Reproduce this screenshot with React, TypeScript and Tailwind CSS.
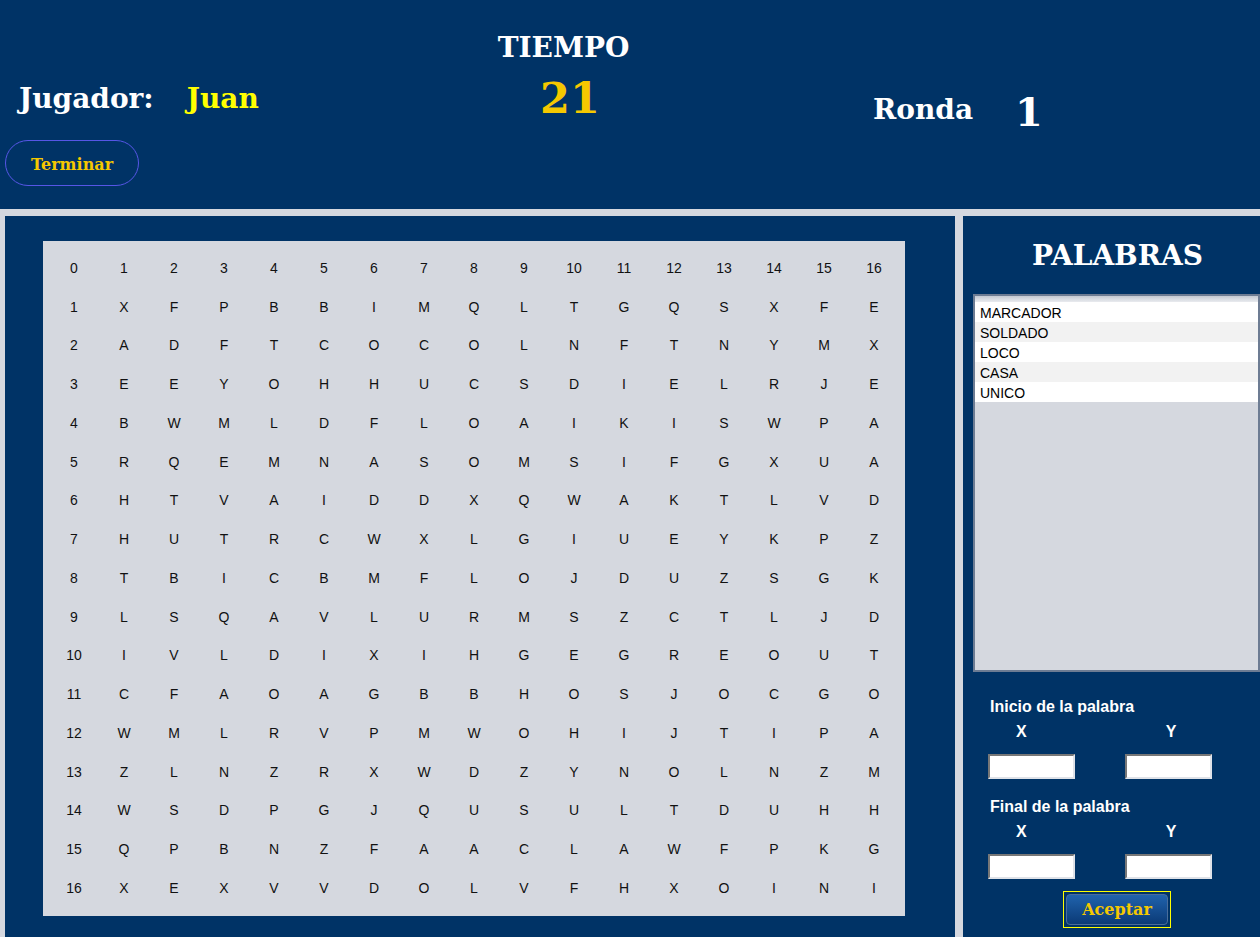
import React from "react";

const ROWS: string[] = [
  "XFPBBIMQLTGQSXFE",
  "ADFTCOCOLNFTNYMX",
  "EEYOHHUCSDIELRJE",
  "BWMLDFLOAIKISWPA",
  "RQEMNASOMSIFGXUA",
  "HTVAIDDXQWAKTLVD",
  "HUTRCWXLGIUEYKPZ",
  "TBICBMFLOJDUZSGK",
  "LSQAVLURMSZCTLJD",
  "IVLDIXIHGEGREOUT",
  "CFAOAGBBHOSJOCGO",
  "WMLRVPMWOHIJTIPA",
  "ZLNZRXWDZYNOLNZM",
  "WSDPGJQUSULTDUHH",
  "QPBNZFAACLAWFPKG",
  "XEXVVDOLVFHXOINI",
];

const WORDS = ["MARCADOR", "SOLDADO", "LOCO", "CASA", "UNICO"];

const serif = "font-['DejaVu_Serif',serif] font-bold";
const sans = "font-['Liberation_Sans',Arial,sans-serif]";

function CoordInputs() {
  return (
    <>
      <div className={`flex h-[20px] text-[16px] leading-[20px] font-bold text-white ${sans}`}>
        <span className="ml-[53px]">X</span>
        <span className="ml-[139px]">Y</span>
      </div>
      <div className="flex mt-[12px] ml-[25px] gap-[50px]">
        <input className="w-[87px] h-[25px] bg-white border-2 border-t-[#777] border-l-[#777] border-b-[#dfe2e8] border-r-[#dfe2e8] outline-none" />
        <input className="w-[87px] h-[25px] bg-white border-2 border-t-[#777] border-l-[#777] border-b-[#dfe2e8] border-r-[#dfe2e8] outline-none" />
      </div>
    </>
  );
}

export default function App() {
  const header = Array.from({ length: 17 }, (_, i) => String(i));

  return (
    <div className="w-[1260px] h-[937px] bg-[#d5d8df] overflow-hidden">
      {/* Top bar: player, timer, round */}
      <header className="h-[209px] bg-[#003366] flex items-start">
        <div className="w-[440px] pl-[5px] pt-[83px]">
          <div className={`flex pl-[14px] text-[28px] leading-[32px] ${serif}`}>
            <span className="text-white">Jugador:</span>
            <span className="ml-[33px] text-[#ffff00]">Juan</span>
          </div>
          <button className={`mt-[25px] w-[134px] h-[46px] pt-[3px] rounded-full border border-[#5656e6] bg-[#003366] text-[16px] text-[#f5c800] ${serif}`}>
            Terminar
          </button>
        </div>

        <div className={`w-[250px] pt-[32px] text-center ${serif}`}>
          <div className="text-[28px] leading-[32px] text-white pr-[3px]">TIEMPO</div>
          <div className="mt-[10px] text-[43px] leading-[48px] text-[#f5c800] pl-[10px]">21</div>
        </div>

        <div className={`flex items-start ml-[183px] text-white ${serif}`}>
          <span className="mt-[94px] text-[28px] leading-[32px]">Ronda</span>
          <span className="mt-[88px] ml-[42px] text-[40px] leading-[48px]">1</span>
        </div>
      </header>

      <div className="flex mt-[7px] gap-[8px]">
        {/* Letter grid */}
        <section className="ml-[5px] w-[950px] h-[721px] bg-[#003366] pl-[38px] pt-[25px]">
          <div className={`w-[862px] h-[675px] bg-[#d5d8df] pl-[6px] pt-[8px] text-[14px] text-[#111] ${sans}`}>
            <div className="grid grid-cols-[repeat(17,50px)] auto-rows-[38.75px]">
              {header.map((n) => (
                <div key={"h" + n} className="flex items-center justify-center">{n}</div>
              ))}
              {ROWS.map((row, r) => (
                <React.Fragment key={r}>
                  <div className="flex items-center justify-center">{r + 1}</div>
                  {row.split("").map((ch, c) => (
                    <div key={c} className="flex items-center justify-center">{ch}</div>
                  ))}
                </React.Fragment>
              ))}
            </div>
          </div>
        </section>

        {/* Word list and answer form */}
        <aside className="w-[297px] h-[721px] bg-[#003366] pt-[24px]">
          <h2 className={`text-center pl-[12px] text-[28px] leading-[32px] text-white ${serif}`}>PALABRAS</h2>

          <div className="ml-[10px] mt-[22px] w-[287px] h-[378px] bg-[#d5d8df] border-2 border-[#6d7c93]">
            <div className="h-[6px] bg-gradient-to-b from-[#c4c9d2] to-[#e9ebef]" />
            <ul className={`text-[14px] leading-[20px] text-black ${sans}`}>
              {WORDS.map((w, i) => (
                <li key={w} className={`h-[20px] pl-[5px] pt-[1px] ${i % 2 === 0 ? "bg-white" : "bg-[#f2f2f2]"}`}>
                  {w}
                </li>
              ))}
            </ul>
          </div>

          <div className={`mt-[25px] pl-[27px] text-[16px] leading-[20px] font-bold text-white ${sans}`}>Inicio de la palabra</div>
          <div className="mt-[5px]">
            <CoordInputs />
          </div>

          <div className={`mt-[18px] pl-[27px] text-[16px] leading-[20px] font-bold text-white ${sans}`}>Final de la palabra</div>
          <div className="mt-[5px]">
            <CoordInputs />
          </div>

          <div className="mt-[12px] ml-[100px] w-[108px] h-[37px] border border-[#ffff00] p-[2px]">
            <button className={`w-full h-full rounded-[4px] border border-[#4a6d9c] bg-gradient-to-b from-[#2063ad] to-[#0b3a76] text-[16px] text-[#f5c800] ${serif}`}>
              Aceptar
            </button>
          </div>
        </aside>
      </div>
    </div>
  );
}
